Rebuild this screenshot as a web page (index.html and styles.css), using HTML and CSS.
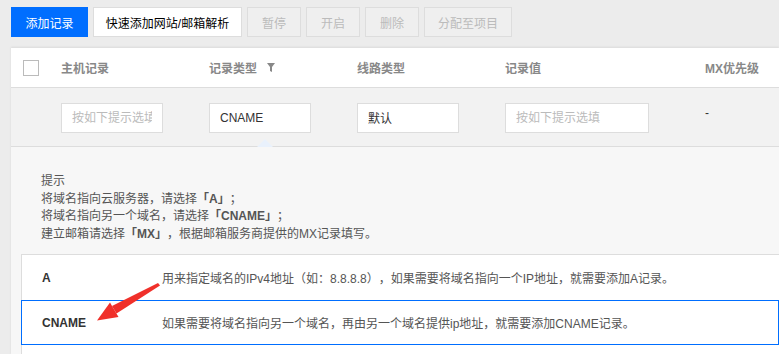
FILE: index.html
```html
<!DOCTYPE html>
<html lang="zh-CN">
<head>
    <meta charset="UTF-8">
    <meta name="viewport" content="width=device-width, initial-scale=1.0">
    <title>记录管理</title>
    <link rel="stylesheet" href="styles.css">
</head>
<body>
    <div class="toolbar">
        <button class="btn btn-primary">添加记录</button>
        <button class="btn btn-quick">快速添加网站/邮箱解析</button>
        <button class="btn btn-disabled">暂停</button>
        <button class="btn btn-disabled">开启</button>
        <button class="btn btn-disabled">删除</button>
        <button class="btn btn-disabled btn-assign">分配至项目</button>
    </div>

    <div class="card">
        <div class="grid-row head-row">
            <span class="cell"><i class="checkbox"></i></span>
            <span class="cell">主机记录</span>
            <span class="cell">记录类型
                <svg class="filter-icon" width="8" height="9" viewBox="0 0 8 9"><path d="M0 0h8L5 4v5L3 8V4z"/></svg>
            </span>
            <span class="cell">线路类型</span>
            <span class="cell">记录值</span>
            <span class="cell">MX优先级</span>
        </div>

        <div class="grid-row edit-row">
            <span class="cell"></span>
            <span class="cell"><input class="field" placeholder="按如下提示选填"></span>
            <span class="cell"><input class="field" value="CNAME"></span>
            <span class="cell"><input class="field" value="默认"></span>
            <span class="cell"><input class="field field-wide" placeholder="按如下提示选填"></span>
            <span class="cell dash">-</span>
        </div>

        <!-- 下拉提示面板 -->
        <div class="tips">
            <p class="tips-text">
                提示<br>
                将域名指向云服务器，请选择<b>「A」</b>；<br>
                将域名指向另一个域名，请选择<b>「CNAME」</b>；<br>
                建立邮箱请选择<b>「MX」</b>，根据邮箱服务商提供的MX记录填写。
            </p>
            <div class="types">
                <div class="type-row">
                    <span class="type-name">A</span>
                    <span class="type-desc">用来指定域名的IPv4地址（如：8.8.8.8），如果需要将域名指向一个IP地址，就需要添加A记录。</span>
                </div>
                <div class="type-row active">
                    <span class="type-name">CNAME</span>
                    <span class="type-desc">如果需要将域名指向另一个域名，再由另一个域名提供ip地址，就需要添加CNAME记录。</span>
                </div>
                <div class="type-row last"></div>
            </div>
        </div>

        <span class="pointer"></span>
        <svg class="arrow" width="66" height="44" viewBox="0 0 66 44">
            <path d="M62 3 L64 5.5 L20.5 33.5 L16 26 Z"/>
            <path d="M1 40.5 L14 22.5 L22.5 37 Z"/>
        </svg>
    </div>
</body>
</html>
```

FILE: styles.css
```css
html, body {
    overflow: hidden;
}

body {
    margin: 0;
    background: #ececec;
    font-family: "Liberation Sans", "Noto Sans CJK SC", sans-serif;
    font-size: 12px;
    color: #444;
    text-spacing-trim: space-all;
}

.toolbar {
    display: flex;
    gap: 5px;
    padding: 7px 0 0 11px;
}

.btn {
    width: 54px;
    height: 30px;
    padding: 0;
    border: 1px solid #ddd;
    background: #fff;
    color: #000;
    font-family: inherit;
    font-size: 12px;
}

.btn-primary {
    width: 77px;
    background: #006eff;
    border-color: #006eff;
    color: #fff;
}

.btn-quick {
    width: 149px;
}

.btn-disabled {
    background: #efefef;
    color: #bbb;
}

.btn-assign {
    width: 88px;
}

/* tabla principal */
.card {
    position: relative;
    margin: 11px 0 0 11px;
    background: #fff;
    box-shadow: 0 -1px 2px rgba(0, 0, 0, 0.08);
}

.grid-row {
    display: grid;
    grid-template-columns: 50px 148px 148px 148px 200px 1fr;
    align-items: center;
    border-bottom: 1px solid #ddd;
}

.head-row {
    height: 39px;
    font-weight: bold;
    color: #888;
}

.head-row .cell {
    display: flex;
    align-items: center;
}

.checkbox {
    width: 14px;
    height: 14px;
    margin-left: 12px;
    border: 1px solid #bbb;
}

.filter-icon {
    margin-left: 10px;
    fill: #888;
}

.edit-row {
    height: 58px;
    background: #f2f2f2;
}

.field {
    box-sizing: border-box;
    width: 102px;
    height: 30px;
    padding: 0 10px;
    margin-top: 1px;
    border: 1px solid #ddd;
    background: #fff;
    font-family: inherit;
    font-size: 12px;
    color: #333;
    outline: none;
}

.field::placeholder {
    color: #bbb;
}

.field-wide {
    width: 144px;
}

.dash {
    color: #333;
    margin-top: -9px;
}

.tips {
    background: #f7f7f7;
    padding: 0 0 0 10px;
}

.tips-text {
    margin: 0;
    padding: 26px 0 11px 20px;
    line-height: 17.5px;
    color: #555;
}

.tips-text b {
    color: #555;
}

.types {
    background: #fff;
    border-top: 1px solid #ddd;
    border-left: 1px solid #ddd;
}

.type-row {
    box-sizing: border-box;
    height: 45px;
    margin-left: -1px;
    border: 1px solid transparent;
    display: flex;
    align-items: center;
    color: #555;
}

.type-row.active {
    border-color: #006eff;
}

.type-row.last {
    height: 10px;
}

.type-name {
    width: 120px;
    padding-left: 20px;
    font-weight: bold;
    color: #333;
}

.pointer {
    position: absolute;
    left: 246px;
    top: 91px;
    width: 0;
    height: 0;
    border-left: 8px solid transparent;
    border-right: 8px solid transparent;
    border-bottom: 8px solid #e9f1fc;
}

.arrow {
    position: absolute;
    left: 85px;
    top: 232px;
    fill: #f0302a;
}
```
